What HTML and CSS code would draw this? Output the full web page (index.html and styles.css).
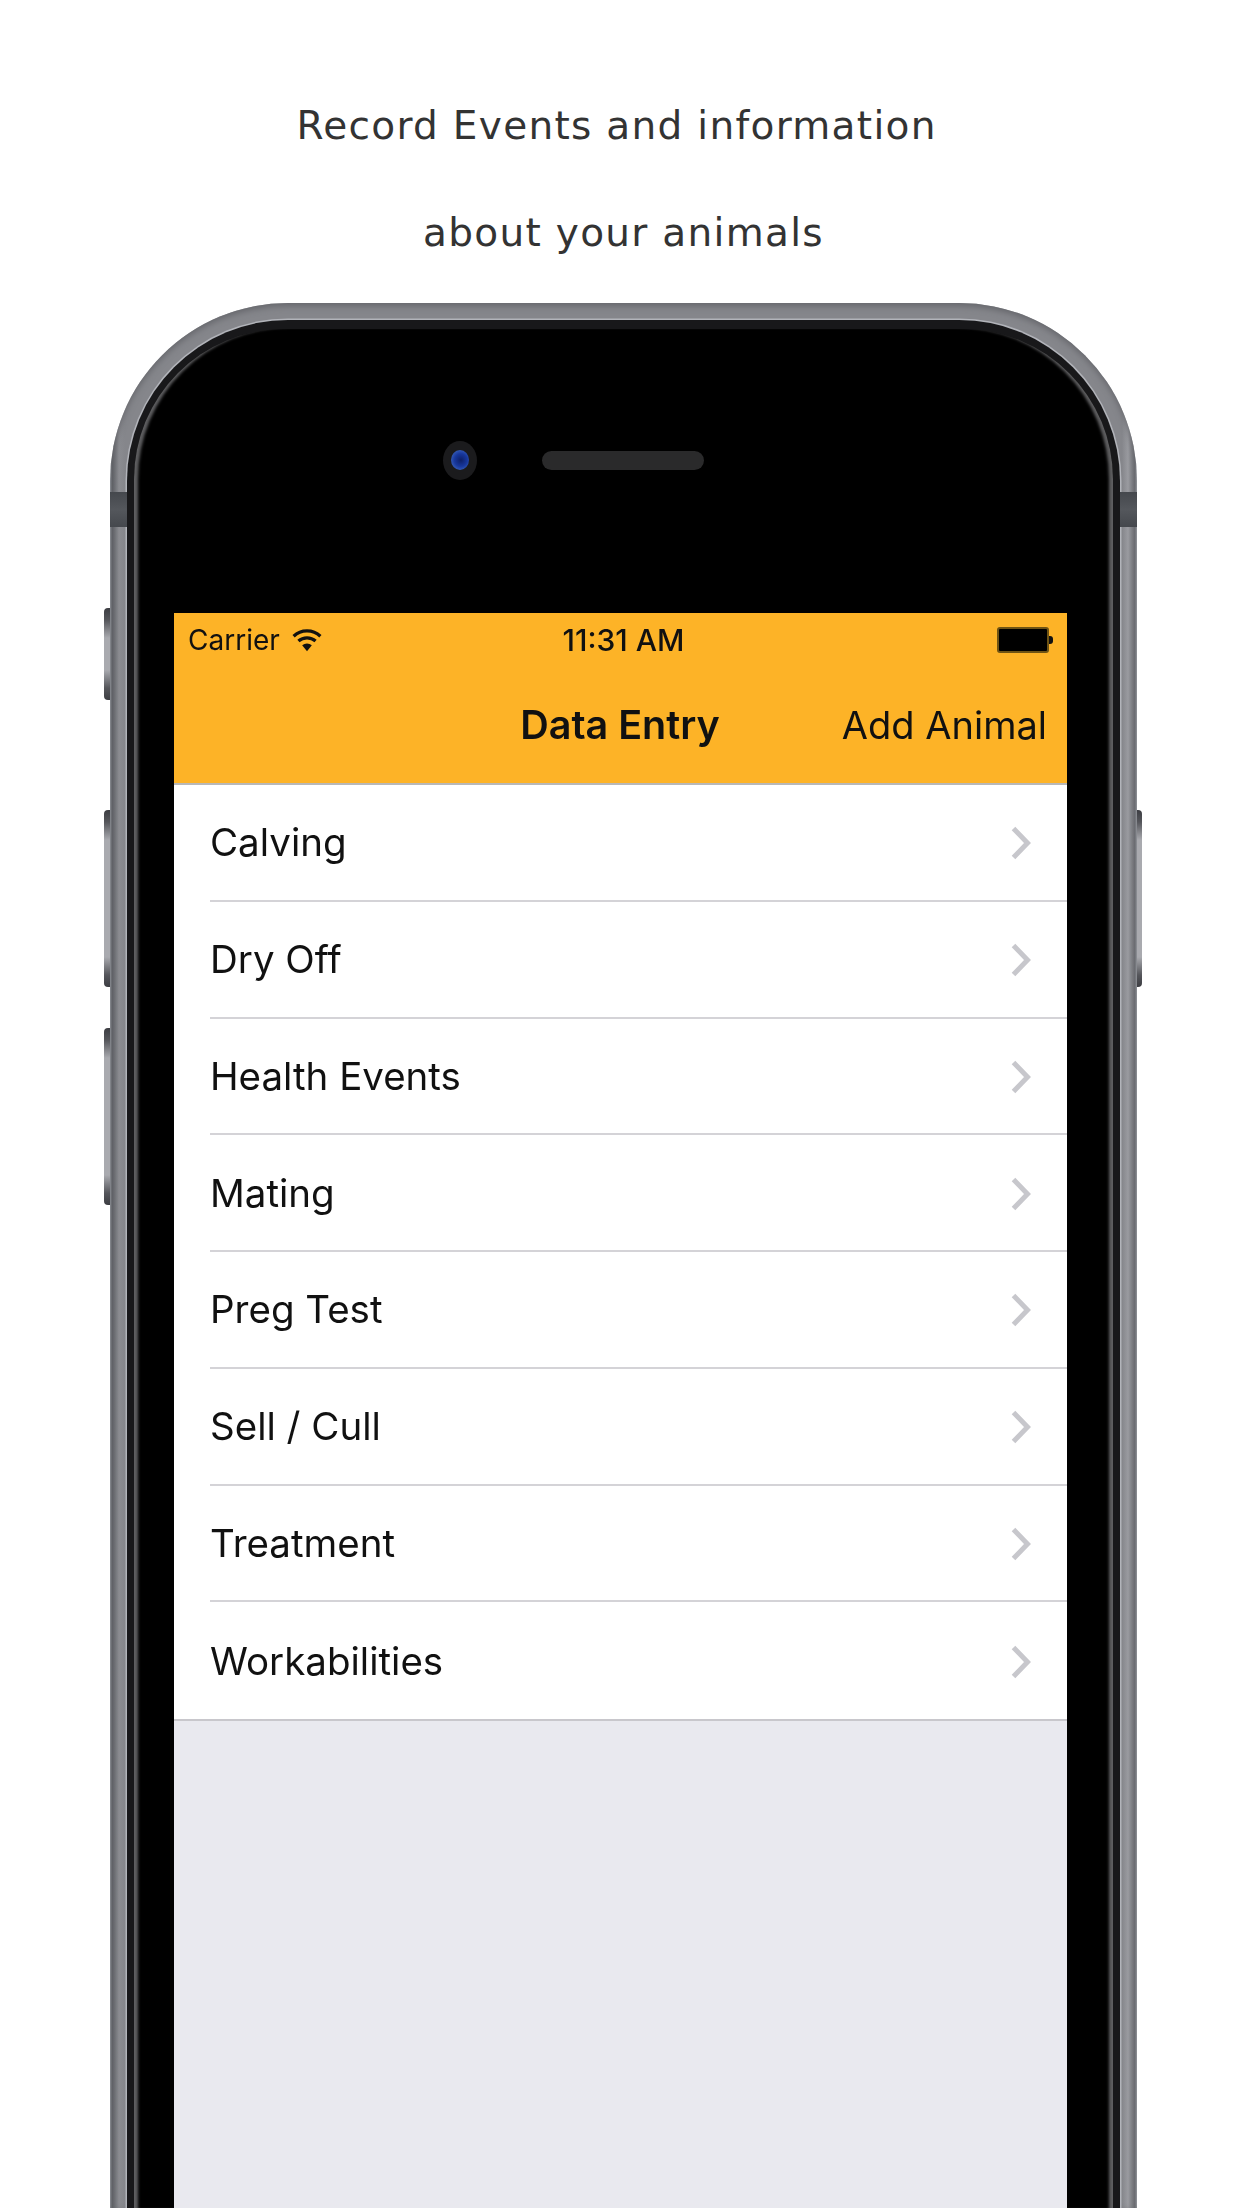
FILE: index.html
```html
<!DOCTYPE html>
<html>
<head>
  <link rel="stylesheet" href="styles.css">
</head>
<body>

  <div class="caption">
    <p>Record Events and information&nbsp;</p>
    <p>about your animals</p>
  </div>

  <div class="phone">
    <span class="band band-left"></span>
    <span class="band band-right"></span>
    <span class="side-btn btn-mute"></span>
    <span class="side-btn btn-vol-up"></span>
    <span class="side-btn btn-vol-down"></span>
    <span class="side-btn btn-power"></span>

    <div class="bezel">
      <div class="face">
        <div class="sensors">
          <span class="camera"><span class="lens"></span></span>
          <span class="speaker"></span>
        </div>

        <div class="screen">
          <div class="app-header">
            <div class="status-bar">
              <div class="status-left">
                <span>Carrier</span>
                <svg class="wifi" viewBox="0 0 28 22" width="30" height="24">
                  <path d="M1.5 7.5 A18 18 0 0 1 26.5 7.5" fill="none" stroke="#111" stroke-width="3"/>
                  <path d="M6 12 A12 12 0 0 1 22 12" fill="none" stroke="#111" stroke-width="3"/>
                  <path d="M14 21.5 L9.5 16 A7 7 0 0 1 18.5 16 Z" fill="#111"/>
                </svg>
              </div>
              <span class="status-time">11:31 AM</span>
              <div class="status-right">
                <span class="battery"></span>
                <span class="battery-tip"></span>
              </div>
            </div>
            <div class="nav-bar">
              <span></span>
              <span class="nav-title">Data Entry</span>
              <span class="nav-action">Add Animal</span>
            </div>
          </div>

          <ul class="menu">
            <li class="menu-row"><div class="menu-inner"><span>Calving</span><svg class="chevron" viewBox="0 0 20 34" width="20" height="34"><polyline points="2.5,2.5 16.5,17 2.5,31.5"/></svg></div></li>
            <li class="menu-row"><div class="menu-inner"><span>Dry Off</span><svg class="chevron" viewBox="0 0 20 34" width="20" height="34"><polyline points="2.5,2.5 16.5,17 2.5,31.5"/></svg></div></li>
            <li class="menu-row"><div class="menu-inner"><span>Health Events</span><svg class="chevron" viewBox="0 0 20 34" width="20" height="34"><polyline points="2.5,2.5 16.5,17 2.5,31.5"/></svg></div></li>
            <li class="menu-row"><div class="menu-inner"><span>Mating</span><svg class="chevron" viewBox="0 0 20 34" width="20" height="34"><polyline points="2.5,2.5 16.5,17 2.5,31.5"/></svg></div></li>
            <li class="menu-row"><div class="menu-inner"><span>Preg Test</span><svg class="chevron" viewBox="0 0 20 34" width="20" height="34"><polyline points="2.5,2.5 16.5,17 2.5,31.5"/></svg></div></li>
            <li class="menu-row"><div class="menu-inner"><span>Sell / Cull</span><svg class="chevron" viewBox="0 0 20 34" width="20" height="34"><polyline points="2.5,2.5 16.5,17 2.5,31.5"/></svg></div></li>
            <li class="menu-row"><div class="menu-inner"><span>Treatment</span><svg class="chevron" viewBox="0 0 20 34" width="20" height="34"><polyline points="2.5,2.5 16.5,17 2.5,31.5"/></svg></div></li>
            <li class="menu-row last"><div class="menu-inner"><span>Workabilities</span><svg class="chevron" viewBox="0 0 20 34" width="20" height="34"><polyline points="2.5,2.5 16.5,17 2.5,31.5"/></svg></div></li>
          </ul>
        </div>
      </div>
    </div>
  </div>

</body>
</html>
```

FILE: styles.css
```css
html, body {
  margin: 0;
  height: 2208px;
  overflow: hidden;
  background-color: #fff;
}
body {
  display: flex;
  flex-direction: column;
  align-items: center;
  padding: 0 105px 0 110px;
  box-sizing: border-box;
}
.caption {
  width: 100%;
  padding-top: 72px;
  margin-bottom: 17px;
  text-align: center;
  font-family: "DejaVu Sans", sans-serif;
  font-size: 39px;
  letter-spacing: 1.3px;
  color: #333;
}
.caption p {
  margin: 0;
  height: 107px;
  line-height: 107px;
}

/* phone body */
.phone {
  position: relative;
  flex: none;
  width: 100%;
  height: 1905px;
  padding: 17px 17px 0;
  box-sizing: border-box;
  border-radius: 178px 178px 0 0;
  background: linear-gradient(90deg, #a7adb4 0, #5c5e63 2px, #8b8c91 9px, #85868b 15px, #85868b calc(100% - 15px), #9a9ba0 calc(100% - 9px), #6a6c71 calc(100% - 2px), #b5bac0 100%);
  box-shadow: inset 0 3px 6px #66676c;
}
.band {
  position: absolute;
  top: 189px;
  width: 17px;
  height: 35px;
  background: linear-gradient(180deg, #45484d, #54575c 50%, #45484d);
}
.band-left { left: 0; }
.band-right { right: 0; }
.side-btn {
  position: absolute;
  width: 6px;
  border-radius: 4px 0 0 4px;
  background: linear-gradient(180deg, #3c3d42 0, #55565b 12px, #a9aaaf 30px, #a9aaaf calc(100% - 30px), #55565b calc(100% - 12px), #3c3d42 100%);
}
.btn-mute { left: -6px; top: 305px; height: 92px; }
.btn-vol-up { left: -6px; top: 507px; height: 177px; }
.btn-vol-down { left: -6px; top: 725px; height: 177px; }
.btn-power {
  right: -5px;
  top: 507px;
  height: 177px;
  width: 5px;
  border-radius: 0 4px 4px 0;
}
.bezel {
  height: 100%;
  padding: 9px 7px 0;
  box-sizing: border-box;
  border-radius: 161px 161px 0 0;
  background-color: #18181a;
  box-shadow: 0 0 0 1.5px #b2b4ba;
}
.face {
  display: flex;
  flex-direction: column;
  height: 100%;
  padding: 0 46px 0 40px;
  box-sizing: border-box;
  border-radius: 150px 150px 0 0;
  background-color: #000;
  box-shadow: inset 6px 0 3px -2px #5e5e60, inset -6px 0 3px -2px #5e5e60;
}

/* camera and speaker */
.sensors {
  display: flex;
  align-items: center;
  gap: 65px;
  height: 262px;
  padding-left: 269px;
  box-sizing: border-box;
}
.camera {
  display: flex;
  align-items: center;
  justify-content: center;
  width: 34px;
  height: 39px;
  border-radius: 50%;
  background-color: #1b1b1d;
}
.lens {
  width: 18px;
  height: 20px;
  border-radius: 50%;
  background: radial-gradient(circle at 55% 50%, #0d1f66 0, #17379c 45%, #3f68bf 85%);
}
.speaker {
  width: 162px;
  height: 19px;
  border-radius: 10px;
  background-color: #2a2a2b;
}

/* app screen */
.screen {
  flex: 1;
  margin-top: 22px;
  background-color: #e9e9ef;
  font-family: Inter, "Liberation Sans", sans-serif;
  color: #111;
  filter: blur(0.6px);
}
.app-header {
  height: 170px;
  background-color: #fdb327;
  border-bottom: 2px solid #b8b8b8;
}
.status-bar {
  display: grid;
  grid-template-columns: 1fr auto 1fr;
  align-items: center;
  height: 54px;
  padding: 0 14px;
  font-size: 28px;
}
.status-left {
  display: flex;
  align-items: center;
  gap: 12px;
}
.status-time {
  padding-left: 6px;
  font-size: 30px;
  font-weight: 500;
}
.status-right {
  display: flex;
  align-items: center;
  justify-content: flex-end;
}
.battery {
  width: 48px;
  height: 22px;
  border: 2px solid #6e5314;
  border-radius: 3px;
  background-color: #000;
}
.battery-tip {
  width: 4px;
  height: 8px;
  border-radius: 0 3px 3px 0;
  background-color: #111;
}
.nav-bar {
  display: grid;
  grid-template-columns: 1fr auto 1fr;
  align-items: center;
  height: 116px;
  padding: 0 20px 0 14px;
  font-size: 38px;
}
.nav-title {
  padding-left: 5px;
  font-size: 39.5px;
  font-weight: 600;
}
.nav-action {
  text-align: right;
}
.menu {
  margin: 0;
  padding: 0;
  list-style: none;
  background-color: #fff;
  border-bottom: 2px solid #c8c7cc;
  font-size: 38.5px;
}
.menu-row {
  height: 116.75px;
  padding-left: 36px;
  box-sizing: border-box;
}
.menu-inner {
  display: flex;
  align-items: center;
  justify-content: space-between;
  height: 100%;
  padding-right: 36px;
  box-sizing: border-box;
  border-bottom: 2px solid #d4d3d7;
}
.menu-row.last .menu-inner {
  border-bottom: none;
}
.chevron {
  margin-top: 2px;
}
.chevron polyline {
  fill: none;
  stroke: #c7c7cc;
  stroke-width: 5;
}
```
